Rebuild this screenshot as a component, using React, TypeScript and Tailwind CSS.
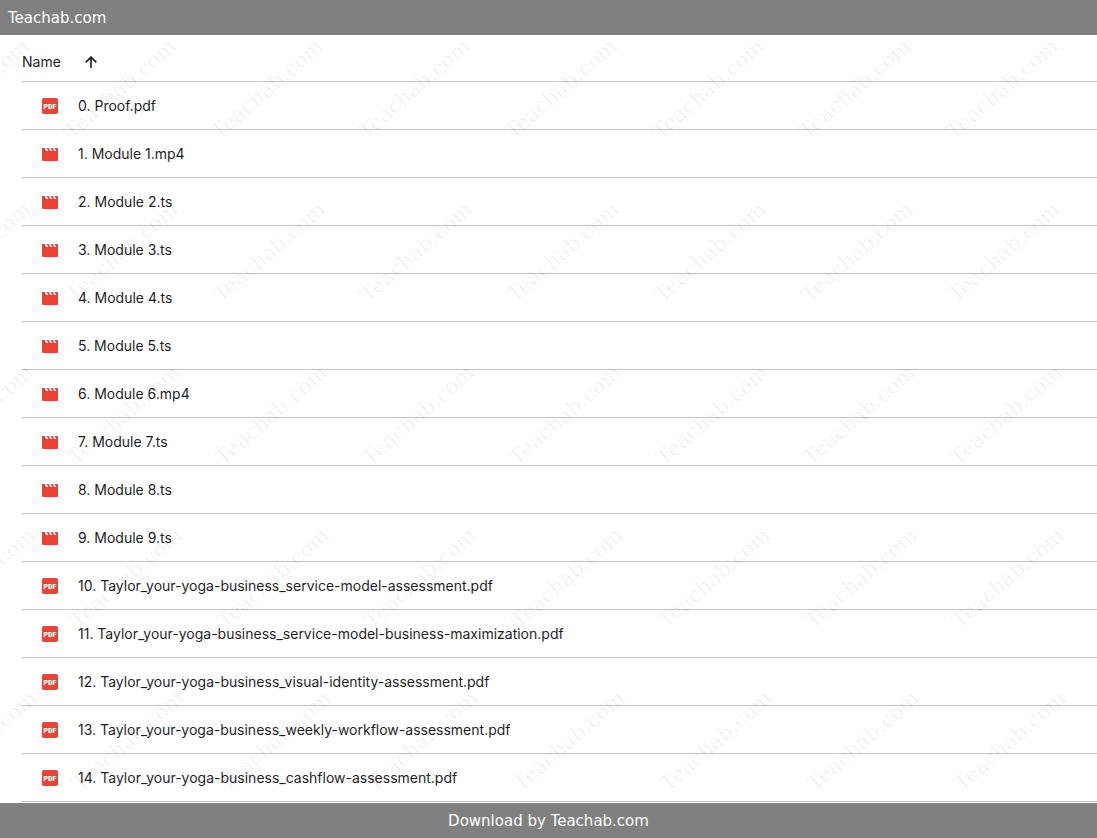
import React from 'react';

type FileKind = 'pdf' | 'video';

interface FileEntry {
  name: string;
  kind: FileKind;
}

const FILES: FileEntry[] = [
  { name: '0. Proof.pdf', kind: 'pdf' },
  { name: '1. Module 1.mp4', kind: 'video' },
  { name: '2. Module 2.ts', kind: 'video' },
  { name: '3. Module 3.ts', kind: 'video' },
  { name: '4. Module 4.ts', kind: 'video' },
  { name: '5. Module 5.ts', kind: 'video' },
  { name: '6. Module 6.mp4', kind: 'video' },
  { name: '7. Module 7.ts', kind: 'video' },
  { name: '8. Module 8.ts', kind: 'video' },
  { name: '9. Module 9.ts', kind: 'video' },
  { name: '10. Taylor_your-yoga-business_service-model-assessment.pdf', kind: 'pdf' },
  { name: '11. Taylor_your-yoga-business_service-model-business-maximization.pdf', kind: 'pdf' },
  { name: '12. Taylor_your-yoga-business_visual-identity-assessment.pdf', kind: 'pdf' },
  { name: '13. Taylor_your-yoga-business_weekly-workflow-assessment.pdf', kind: 'pdf' },
  { name: '14. Taylor_your-yoga-business_cashflow-assessment.pdf', kind: 'pdf' },
];

const PdfIcon: React.FC = () => (
  <svg viewBox="0 0 16 16" className="size-4 shrink-0" aria-hidden="true">
    <rect width="16" height="16" rx="1.8" fill="#ea4335" />
    <text x="8" y="10.6" textAnchor="middle" fontSize="7" fontWeight="900" fill="#fff" fontFamily="Roboto, sans-serif">
      PDF
    </text>
  </svg>
);

const VideoIcon: React.FC = () => (
  <svg viewBox="0 0 16 16" className="size-4 shrink-0" aria-hidden="true">
    <path
      fill="#ea4335"
      d="M16 2V13.4C16 14.3 15.3 15 14.4 15H1.6C0.7 15 0 14.3 0 13.4V2H2.6L4.4 5H6.4L4.6 2H6.6L8.4 5H10.4L8.6 2H10.6L12.4 5H14.4L12.6 2Z"
    />
  </svg>
);

const WATERMARK_ROWS = [0, 1, 2, 3, 4];
const WATERMARK_COLS = [-1, 0, 1, 2, 3, 4, 5, 6];

// Slanted site name repeated over the whole list
const Watermark: React.FC = () => (
  <svg className="pointer-events-none absolute inset-0 size-full" aria-hidden="true">
    <g fill="#000" fillOpacity="0.06" fontSize="21" fontFamily="'DejaVu Serif', serif">
      {WATERMARK_ROWS.map(row =>
        WATERMARK_COLS.map(col => {
          const x = 72 + col * 147 + row * 2;
          const y = 105 + row * 163;
          return (
            <text key={`${row}-${col}`} transform={`translate(${x} ${y}) rotate(-41)`}>
              Teachab.com
            </text>
          );
        })
      )}
    </g>
  </svg>
);

const App: React.FC = () => (
  <div className="flex min-h-screen flex-col bg-white font-['Inter',sans-serif] text-[#1f1f1f]">
    <header className="bg-[#808080] px-2 pt-[7px] pb-[5px] font-['DejaVu_Sans',sans-serif] text-[15px] leading-[23px] text-white">
      Teachab.com
    </header>

    <main className="relative flex-1 overflow-hidden pl-[22px]">
      <table className="w-full text-left text-sm">
        <thead>
          <tr className="h-[46px] border-b border-[#c0c0c0]">
            <th className="pt-2 font-normal">
              <button type="button" className="flex items-center gap-6">
                Name
                <svg viewBox="0 0 12 12" className="size-3" fill="none" stroke="currentColor" strokeWidth="1.6" aria-label="Ascending">
                  <path d="M6 12V1.2M0.7 6.4L6 1.1l5.3 5.3" />
                </svg>
              </button>
            </th>
          </tr>
        </thead>
        <tbody>
          {FILES.map(file => (
            <tr key={file.name} className="h-12 border-b border-[#c0c0c0]">
              <td className="pt-0.5 pl-5">
                <a href="#" className="flex items-center gap-5">
                  {file.kind === 'pdf' ? <PdfIcon /> : <VideoIcon />}
                  {file.name}
                </a>
              </td>
            </tr>
          ))}
        </tbody>
      </table>
      <Watermark />
    </main>

    <footer className="bg-[#808080] px-2 pt-[7px] pb-[5px] text-center font-['DejaVu_Sans',sans-serif] text-[15px] leading-[23px] text-white">
      Download by Teachab.com
    </footer>
  </div>
);

export default App;
